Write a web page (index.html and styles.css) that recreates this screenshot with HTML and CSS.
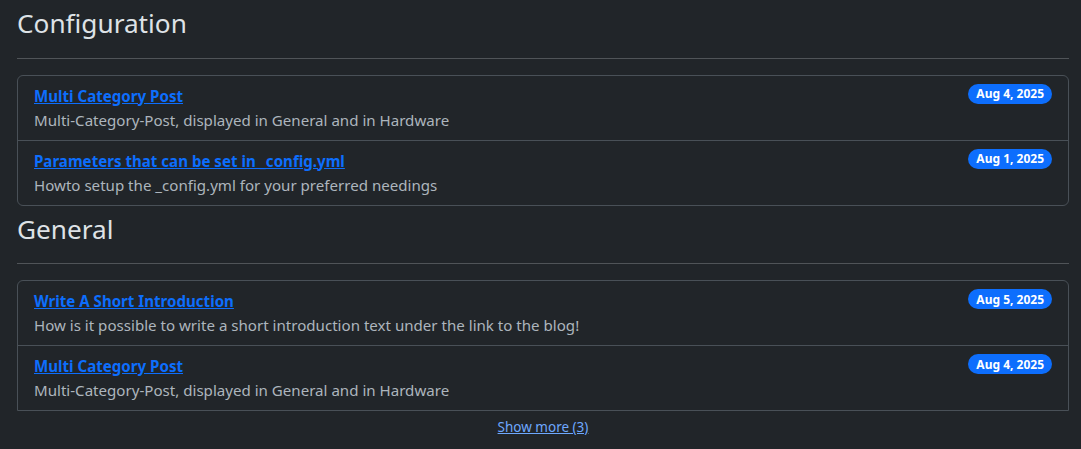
FILE: index.html
```html
<!DOCTYPE html>
<html lang="en">
<head>
<meta charset="utf-8">
<title>Categories</title>
<link rel="stylesheet" href="styles.css">
</head>
<body>
<main class="container">
  <section class="category">
    <h2 class="category-title">Configuration</h2>
    <hr class="divider">
    <ul class="post-list">
      <li class="post-item">
        <div class="post-text">
          <a class="post-link" href="#">Multi Category Post</a>
          <p class="post-desc">Multi-Category-Post, displayed in General and in Hardware</p>
        </div>
        <span class="badge">Aug 4, 2025</span>
      </li>
      <li class="post-item">
        <div class="post-text">
          <a class="post-link" href="#">Parameters that can be set in _config.yml</a>
          <p class="post-desc">Howto setup the _config.yml for your preferred needings</p>
        </div>
        <span class="badge">Aug 1, 2025</span>
      </li>
    </ul>
  </section>
  <section class="category">
    <h2 class="category-title">General</h2>
    <hr class="divider">
    <ul class="post-list post-list-clipped">
      <li class="post-item">
        <div class="post-text">
          <a class="post-link" href="#">Write A Short Introduction</a>
          <p class="post-desc">How is it possible to write a short introduction text under the link to the blog!</p>
        </div>
        <span class="badge">Aug 5, 2025</span>
      </li>
      <li class="post-item">
        <div class="post-text">
          <a class="post-link" href="#">Multi Category Post</a>
          <p class="post-desc">Multi-Category-Post, displayed in General and in Hardware</p>
        </div>
        <span class="badge">Aug 4, 2025</span>
      </li>
    </ul>
    <div class="show-more"><a href="#">Show more (3)</a></div>
  </section>
</main>
</body>
</html>
```

FILE: styles.css
```css
* { box-sizing: border-box; }
html, body {
  margin: 0;
  background: #212529;
  color: #dee2e6;
  font-family: "Noto Sans", "Open Sans", sans-serif;
  font-size: 15.1px;
  line-height: 24px;
}
.container {
  padding: 0 12px 0 17px;
}
.category-title {
  margin: 0;
  padding-top: 8px;
  height: 41.5px;
  font-size: 26.2px;
  font-weight: 400;
  line-height: 1.2;
  color: #dee2e6;
}
.divider {
  margin: 16px 0;
  border: 0;
  border-top: 1px solid rgba(222, 226, 230, 0.25);
}
.post-list {
  list-style: none;
  margin: 0;
  padding: 0;
  border: 1px solid #495057;
  border-radius: 6px;
}
.post-list-clipped {
  border-bottom-left-radius: 0;
  border-bottom-right-radius: 0;
}
.post-item {
  display: flex;
  justify-content: space-between;
  align-items: flex-start;
  padding: 8px 16px;
}
.post-item + .post-item {
  border-top: 1px solid #495057;
}
.post-link {
  color: #0d6efd;
  font-weight: 700;
  text-decoration: underline;
}
.post-desc {
  margin: 0;
  color: #adb5bd;
}
.badge {
  display: inline-block;
  padding: 3.5px 8px;
  border-radius: 999px;
  background: #0d6efd;
  color: #fff;
  font-size: 12px;
  font-weight: 700;
  line-height: 13px;
  white-space: nowrap;
}
.show-more {
  text-align: center;
  padding-top: 4px;
  font-size: 13.5px;
}
.show-more a {
  color: #6ea8fe;
  text-decoration: underline;
}
```
